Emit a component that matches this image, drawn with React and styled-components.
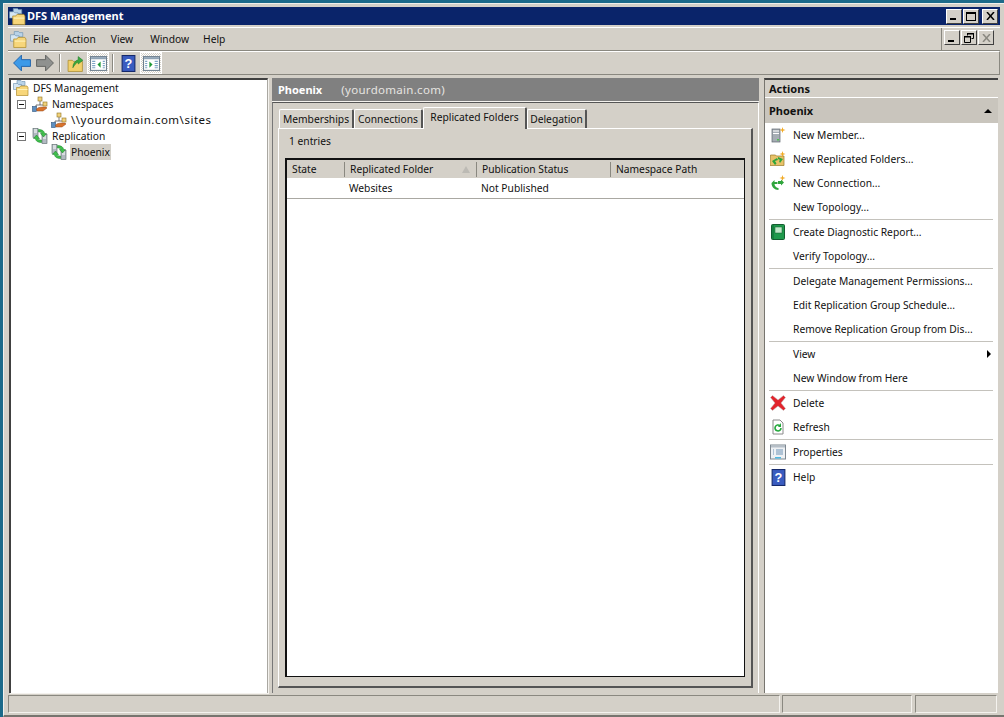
import React from "react";
import styled, { createGlobalStyle } from "styled-components";

const Global = createGlobalStyle`
  html, body { margin: 0; padding: 0; background: #d4d0c8; }
  * { box-sizing: border-box; }
`;

const Desktop = styled.div`
  width: 1004px;
  height: 717px;
  overflow: hidden;
  background: #1c6a8a;
  padding: 3px 0 0 3px;
  font-family: "Noto Sans", "Liberation Sans", sans-serif;
  font-size: 10.25px;
  color: #111;
`;

const Win = styled.div`
  width: 1001px;
  height: 714px;
  background: #d4d0c8;
  border-top: 1px solid #f2f0ec;
  border-left: 1px solid #f2f0ec;
  border-bottom: 2px solid #77756f;
  padding: 3px 4px 0 4px;
  display: flex;
  flex-direction: column;
`;

const TitleBar = styled.div`
  height: 18px;
  flex: none;
  background: #0a246a;
  display: flex;
  align-items: center;
  padding: 0 2px 0 1px;
  color: #fff;
  font-weight: 700;
  font-size: 11px;
  gap: 1px;
`;

const TitleText = styled.span`
  flex: 1;
  padding-bottom: 2px;
`;

const CaptionBtn = styled.div`
  width: 16px;
  height: 15px;
  margin-left: ${(p) => (p.$gap ? 2 : 0)}px;
  background: #d4d0c8;
  border: 1px solid;
  border-color: #fff #404040 #404040 #fff;
  display: flex;
  align-items: center;
  justify-content: center;
`;

const MenuRow = styled.div`
  margin-top: 2px;
  height: 24px;
  flex: none;
  display: flex;
  border-top: 1px solid #fff;
`;

const MenuBar = styled.div`
  flex: 1;
  display: flex;
  align-items: center;
  padding-left: 2px;
  border-right: 1px solid #8a8880;
  border-bottom: 1px solid #8a8880;
`;

const MenuItem = styled.span`
  margin-left: ${(p) => p.$left}px;
  padding-bottom: 1px;
`;

const MdiButtons = styled.div`
  width: 58px;
  display: flex;
  align-items: center;
  padding: 0 0 3px 2px;
  gap: 1px;
  border-bottom: 1px solid #8a8880;
`;

const MdiBtn = styled(CaptionBtn)`
  width: 16px;
  height: 15px;
`;

const ToolBar = styled.div`
  height: 24px;
  flex: none;
  display: flex;
  align-items: center;
  padding-left: 2px;
  border-top: 1px solid #fff;
  border-right: 1px solid #8a8880;
  border-bottom: 1px solid #8a8880;
`;

const ToolBtn = styled.div`
  width: ${(p) => (p.$toggled ? 22 : 23)}px;
  height: 22px;
  display: flex;
  align-items: center;
  justify-content: center;
  ${(p) =>
    p.$toggled &&
    `background: repeating-conic-gradient(#fff 0 25%, #d4d0c8 0 50%) 0 0 / 2px 2px;
     border: 1px solid #fff;`}
`;

const ToolSep = styled.div`
  width: 2px;
  height: 18px;
  margin: 0 3px;
  border-left: 1px solid #8a8880;
  border-right: 1px solid #fff;
`;

const Main = styled.div`
  margin-top: 3px;
  flex: 1;
  min-height: 0;
  display: flex;
`;

const TreePane = styled.div`
  width: 259px;
  flex: none;
  margin-left: 1px;
  background: #fff;
  border-top: 2px solid #404040;
  border-left: 2px solid #404040;
  border-right: 1px solid #aaa8a2;
  box-shadow: 1px 1px 0 #f4f2ee;
  padding: 0 0 0 2px;
`;

const TreeRow = styled.div`
  height: 16px;
  display: flex;
  align-items: center;
  padding-left: ${(p) => p.$indent}px;
`;

const ExpandBox = styled.div`
  width: 9px;
  height: 9px;
  margin-right: 6px;
  border: 1px solid #777;
  background: #fff;
  position: relative;
  &::after {
    content: "";
    position: absolute;
    left: 1px;
    top: 3px;
    width: 5px;
    height: 1px;
    background: #111;
  }
`;

const TreeLabel = styled.span`
  margin-left: ${(p) => (p.$selected ? 3 : 4)}px;
  padding: 0 ${(p) => (p.$selected ? 1 : 0)}px;
  height: 16px;
  line-height: 16px;
  font-size: ${(p) => (p.$big ? 11.5 : 10.25)}px;
  letter-spacing: ${(p) => (p.$big ? 0.5 : 0)}px;
  background: ${(p) => (p.$selected ? "#d4d0c8" : "transparent")};
`;

const CenterPane = styled.div`
  width: 487px;
  flex: none;
  margin-left: 4px;
  display: flex;
  flex-direction: column;
`;

const CenterHeader = styled.div`
  height: 24px;
  flex: none;
  background: #808080;
  border-bottom: 1px solid #f4f2ee;
  display: flex;
  align-items: center;
  padding: 0 6px;
  color: #fff;
  font-weight: 700;
  font-size: 11px;
`;

const HeaderDomain = styled.span`
  margin-left: 19px;
  font-weight: 400;
  color: #e6e4e0;
  font-size: 11.5px;
  letter-spacing: 0.3px;
`;

const CenterBody = styled.div`
  flex: 1;
  min-height: 0;
  border-top: 1px solid #555;
  border-left: 1px solid #777;
  border-right: 1px solid #fff;
  padding: 4px 5px 5px 5px;
  display: flex;
  flex-direction: column;
`;

const Tabs = styled.div`
  height: 21px;
  flex: none;
  display: flex;
  align-items: flex-end;
  padding-left: 1px;
  position: relative;
  z-index: 1;
`;

const Tab = styled.div`
  width: ${(p) => p.$width}px;
  height: ${(p) => (p.$active ? 22 : 19)}px;
  margin-bottom: ${(p) => (p.$active ? -1 : 0)}px;
  background: #d4d0c8;
  border-top: 1px solid #fff;
  border-left: 1px solid #fff;
  border-right: 2px solid #555;
  border-radius: 2px 2px 0 0;
  display: flex;
  align-items: center;
  justify-content: center;
  padding-bottom: ${(p) => (p.$active ? 4 : 0)}px;
`;

const TabPanel = styled.div`
  flex: 1;
  min-height: 0;
  border-top: 1px solid #fff;
  border-left: 1px solid #fff;
  border-right: 2px solid #555;
  border-bottom: 2px solid #555;
  padding: 0 6px 9px 6px;
  display: flex;
  flex-direction: column;
`;

const EntryCount = styled.div`
  height: 29px;
  flex: none;
  padding: 5px 0 0 4px;
  line-height: 14px;
`;

const Table = styled.div`
  flex: 1;
  min-height: 0;
  background: #fff;
  border: 2px solid #111;
  border-right-width: 1px;
  border-bottom-width: 1px;
`;

const HeaderRow = styled.div`
  height: 18px;
  background: #d4d0c8;
  display: grid;
  grid-template-columns: 58px 132px 134px 1fr;
  align-items: center;
`;

const HeaderCell = styled.div`
  height: 15px;
  padding-left: 5px;
  line-height: 15px;
  position: relative;
  border-right: ${(p) => (p.$last ? "none" : "1px solid #8a8880")};
`;

const SortArrow = styled.span`
  position: absolute;
  right: 6px;
  top: 4px;
  width: 0;
  height: 0;
  border-left: 4px solid transparent;
  border-right: 4px solid transparent;
  border-bottom: 7px solid #bcbab4;
`;

const DataRow = styled.div`
  height: 21px;
  display: grid;
  grid-template-columns: 58px 132px 134px 1fr;
  align-items: center;
  border-bottom: 1px solid #aaa8a2;
`;

const DataCell = styled.div`
  padding-left: ${(p) => p.$pad}px;
`;

const ActionsPane = styled.div`
  width: 234px;
  flex: none;
  margin-left: 5px;
  display: flex;
  flex-direction: column;
  border-left: 1px solid #77756f;
  border-top: 2px solid #404040;
`;

const ActionsTitle = styled.div`
  height: 18px;
  flex: none;
  padding-left: 4px;
  font-weight: 700;
  font-size: 11px;
  display: flex;
  align-items: center;
  border-bottom: 1px solid #fff;
`;

const SectionHead = styled.div`
  height: 25px;
  flex: none;
  background: #c9c5bd;
  padding: 0 6px 0 4px;
  font-weight: 700;
  font-size: 11px;
  display: flex;
  align-items: center;
  justify-content: space-between;
`;

const UpArrow = styled.span`
  width: 0;
  height: 0;
  border-left: 4px solid transparent;
  border-right: 4px solid transparent;
  border-bottom: 4px solid #000;
`;

const ActionList = styled.div`
  flex: 1;
  background: #fff;
`;

const ActionRow = styled.div`
  height: 24px;
  display: flex;
  align-items: center;
  padding-right: 7px;
`;

const ActionIcon = styled.div`
  width: 28px;
  flex: none;
  padding-left: 5px;
  display: flex;
  align-items: center;
`;

const ActionText = styled.span`
  flex: 1;
`;

const RightArrow = styled.span`
  width: 0;
  height: 0;
  border-top: 4px solid transparent;
  border-bottom: 4px solid transparent;
  border-left: 4px solid #000;
`;

const Divider = styled.div`
  height: 1px;
  margin: 0 5px 0 4px;
  background: #c4c2bc;
`;

const StatusBar = styled.div`
  height: 18px;
  flex: none;
  margin-top: 2px;
  margin-bottom: 2px;
  display: flex;
`;

const StatusCell = styled.div`
  width: ${(p) => p.$width}px;
  margin-left: ${(p) => p.$gap}px;
  border: 1px solid;
  border-color: #8a8880 #f4f2ee #f4f2ee #8a8880;
`;

const Svg = ({ size = 16, children }) => (
  <svg width={size} height={size} viewBox="0 0 16 16">
    {children}
  </svg>
);

const FolderStack = ({ size = 16 }) => (
  <Svg size={size}>
    <path d="M4 .5h4l1 1h3v4H4z" fill="#b9d3e8" stroke="#6a8fae" strokeWidth=".6" />
    <path d="M.5 3.500h4l1 1h3v5h-8z" fill="#d5e6f3" stroke="#6a8fae" strokeWidth=".6" />
    <path d="M3.500 7.500h3l1-1.500h6.500l1 1.500v8h-11.500z" fill="#f7d67a" stroke="#b08d2e" strokeWidth=".7" />
    <path d="M4.500 9.500h10" stroke="#fff2b8" />
  </Svg>
);

const Namespace = () => (
  <Svg>
    <path d="M8 5v4M4 9h9M4 9v2M13 9v1" stroke="#555" fill="none" strokeWidth=".8" />
    <rect x="6" y="1" width="4" height="4" fill="#f1d27b" stroke="#8f7424" strokeWidth=".6" />
    <rect x="11" y="6" width="4" height="4" fill="#f1d27b" stroke="#8f7424" strokeWidth=".6" />
    <rect x=".5" y="10.500" width="4" height="5" fill="#5f8fbf" stroke="#2e5580" strokeWidth=".6" />
    <path d="M4.500 13c2-2 5-2 9.500-2l1 1-4 3H5z" fill="#d9742c" stroke="#93451a" strokeWidth=".5" />
  </Svg>
);

const Replication = () => (
  <Svg>
    <rect x="1" y="0.500" width="5" height="9" fill="#b2bac2" stroke="#566" strokeWidth=".6" />
    <path d="M2 2h3M2 4h3" stroke="#fff" />
    <rect x="10" y="6.500" width="5" height="9" fill="#b2bac2" stroke="#566" strokeWidth=".6" />
    <path d="M11 8h3M11 10h3" stroke="#fff" />
    <path d="M6.500 1.500c3.500 0 6 1.500 6 4l2 0-3 3.500-3-3.500h1.500c0-1-1.500-1.500-3.500-1.500z" fill="#3fc04c" stroke="#1b7a28" strokeWidth=".5" />
    <path d="M9.500 14.500c-3.500 0-6-1.500-6-4l-2 0 3-3.500 3 3.500H6c0 1 1.500 1.500 3.500 1.500z" fill="#3fc04c" stroke="#1b7a28" strokeWidth=".5" />
  </Svg>
);

const BackArrow = ({ fill, stroke }) => (
  <Svg size={18}>
    <path d="M.5 8l7-7v4h8v6h-8v4z" fill={fill} stroke={stroke} strokeWidth=".8" />
  </Svg>
);

const ForwardArrow = ({ fill, stroke }) => (
  <Svg size={18}>
    <path d="M15.500 8l-7-7v4h-8v6h8v4z" fill={fill} stroke={stroke} strokeWidth=".8" />
  </Svg>
);

const UpFolder = () => (
  <Svg size={17}>
    <path d="M1 5h4l1 1h8.500v9.500H1z" fill="#f2d06b" stroke="#a88a2c" strokeWidth=".7" />
    <path d="M5.500 12c0-4 2-6.500 5-7.500V1.500L15 5l-4.500 3.500V6.500c-2 1-3.500 3-5 5.500z" fill="#3aa93f" stroke="#1e7a28" strokeWidth=".5" />
  </Svg>
);

const PaneIcon = ({ right }) => (
  <Svg size={17}>
    <rect x="0.500" y="1.500" width="15" height="13" fill="#fff" stroke="#6d7f8f" />
    <rect x="1" y="2" width="14" height="2" fill="#8ea2b4" />
    {right ? (
      <>
        <path d="M2 6h2M2 8h2M2 10h2M2 12h2" stroke="#7ea3c4" />
        <path d="M6 6l3 3-3 3z" fill="#1f9a36" />
        <path d="M11 6h3M11 8h3M11 10h3M11 12h3" stroke="#7ea3c4" />
      </>
    ) : (
      <>
        <path d="M2 6h3M2 8h3M2 10h3M2 12h3" stroke="#7ea3c4" />
        <path d="M10 6L7 9l3 3z" fill="#1f9a36" />
        <path d="M12 6h2M12 8h2M12 10h2M12 12h2" stroke="#7ea3c4" />
      </>
    )}
  </Svg>
);

const HelpIcon = () => (
  <Svg size={17}>
    <rect x="2" y="0.500" width="12" height="15" fill="#3a5cc0" stroke="#15296b" />
    <text x="8" y="12.500" textAnchor="middle" fontSize="12" fontWeight="700" fill="#fff" fontFamily="Liberation Sans">?</text>
  </Svg>
);

const Spark = () => (
  <path d="M12.500 0l.7 2.300L15.500 3l-2.300.7-.7 2.300-.7-2.300L9.500 3l2.300-.7z" fill="#f2a922" />
);

const NewMember = () => (
  <Svg>
    <rect x="2" y="2" width="8" height="13" fill="#a6adb4" stroke="#5d666e" strokeWidth=".7" />
    <path d="M3 4h6M3 6.500h6" stroke="#fff" />
    <rect x="7" y="12" width="2" height="1.500" fill="#4fc24f" />
    <Spark />
  </Svg>
);

const NewFolders = () => (
  <Svg>
    <path d="M.5 4h5l1 1h7.500v9.500h-14z" fill="#e8c269" stroke="#9a7a28" strokeWidth=".7" />
    <path d="M7 7L2 10l3 4 1.500-1.500L5 10l3-1z" fill="#2fa53c" />
    <path d="M8 6l5 2-3 4-1-2 1-1-2-1z" fill="#2fa53c" />
    <Spark />
  </Svg>
);

const NewConnection = () => (
  <Svg>
    <path d="M1.500 8l3-3v2h3v2h-3c0 2 2 4 4 4v2c-4 0-7-3-7-7z" fill="#2fa53c" />
    <path d="M8 6h3V4.500l3 3-3 3V9H8z" fill="#2fa53c" />
    <Spark />
  </Svg>
);

const ReportBook = () => (
  <Svg>
    <rect x="1.500" y="0.500" width="13" height="15" rx="1" fill="#1f9a4c" stroke="#145c2f" />
    <rect x="5" y="3" width="7" height="6" fill="#bfe8c8" stroke="#145c2f" strokeWidth=".5" />
    <path d="M3 1v14" stroke="#0f6b33" />
  </Svg>
);

const DeleteX = () => (
  <Svg>
    <path d="M.5 2.500l2-2L8 5l5.500-4.500 2 2L11 8l4.500 5.500-2 2L8 11l-5.500 4.500-2-2L5 8z" fill="#e2242c" stroke="#b8b8b8" strokeWidth=".5" />
  </Svg>
);

const RefreshIcon = () => (
  <Svg>
    <path d="M3 1h7l3 3v11H3z" fill="#fff" stroke="#8a8a8a" />
    <path d="M11 9a3 3 0 1 1-1-2.300" fill="none" stroke="#22a83a" strokeWidth="1.600" />
    <path d="M11 4v4H8z" fill="#22a83a" />
  </Svg>
);

const PropertiesIcon = () => (
  <Svg>
    <rect x=".5" y="1" width="15" height="14" fill="#eef1f4" stroke="#7d8790" />
    <rect x="1" y="1.500" width="14" height="2" fill="#b6bfc8" />
    <path d="M3 6h1M3 8h1M3 10h1M6 6h7M6 8h7M6 10h7" stroke="#6f93b5" />
    <rect x="5" y="13" width="6" height="1.500" fill="#4fb8e0" />
  </Svg>
);

const menuItems = [
  { label: "File", left: 6 },
  { label: "Action", left: 16 },
  { label: "View", left: 15 },
  { label: "Window", left: 17 },
  { label: "Help", left: 14 },
];

const columns = ["State", "Replicated Folder", "Publication Status", "Namespace Path"];

const tabs = [
  { label: "Memberships", width: 75 },
  { label: "Connections", width: 69 },
  { label: "Replicated Folders", width: 104, active: true },
  { label: "Delegation", width: 60 },
];

const actionGroups = [
  [
    { label: "New Member...", icon: <NewMember /> },
    { label: "New Replicated Folders...", icon: <NewFolders /> },
    { label: "New Connection...", icon: <NewConnection /> },
    { label: "New Topology..." },
  ],
  [
    { label: "Create Diagnostic Report...", icon: <ReportBook /> },
    { label: "Verify Topology..." },
  ],
  [
    { label: "Delegate Management Permissions..." },
    { label: "Edit Replication Group Schedule..." },
    { label: "Remove Replication Group from Dis..." },
  ],
  [{ label: "View", submenu: true }, { label: "New Window from Here" }],
  [
    { label: "Delete", icon: <DeleteX /> },
    { label: "Refresh", icon: <RefreshIcon /> },
  ],
  [{ label: "Properties", icon: <PropertiesIcon /> }],
  [{ label: "Help", icon: <HelpIcon /> }],
];

const App = () => (
  <Desktop>
    <Global />
    <Win>
      <TitleBar>
        <FolderStack size={17} />
        <TitleText>DFS Management</TitleText>
        <CaptionBtn>
          <svg width="8" height="8"><rect x="0" y="6" width="6" height="2" fill="#000" /></svg>
        </CaptionBtn>
        <CaptionBtn>
          <svg width="10" height="9"><rect x=".5" y=".5" width="9" height="8" fill="none" stroke="#000" /><rect x="0" y="0" width="10" height="2" fill="#000" /></svg>
        </CaptionBtn>
        <CaptionBtn $gap>
          <svg width="9" height="8"><path d="M1 0l7 8M8 0l-7 8" stroke="#000" strokeWidth="1.500" /></svg>
        </CaptionBtn>
      </TitleBar>
      <MenuRow>
        <MenuBar>
          <FolderStack size={17} />
          {menuItems.map((m) => (
            <MenuItem key={m.label} $left={m.left}>{m.label}</MenuItem>
          ))}
        </MenuBar>
        <MdiButtons>
          <MdiBtn>
            <svg width="8" height="8"><rect x="0" y="6" width="6" height="2" fill="#000" /></svg>
          </MdiBtn>
          <MdiBtn>
            <svg width="10" height="10"><path d="M3.500 2.500v-2h6v5h-2M.5 3.500h6v6h-6z" fill="none" stroke="#000" /><path d="M3 0h7v1.500H3zM0 3h7v1.500H0z" /></svg>
          </MdiBtn>
          <MdiBtn>
            <svg width="9" height="8"><path d="M1 0l7 8M8 0l-7 8" stroke="#8a8880" strokeWidth="1.500" /></svg>
          </MdiBtn>
        </MdiButtons>
      </MenuRow>
      <ToolBar>
        <ToolBtn><BackArrow fill="#3d9ae8" stroke="#1c5fa8" /></ToolBtn>
        <ToolBtn><ForwardArrow fill="#8f918f" stroke="#5c5e5c" /></ToolBtn>
        <ToolSep />
        <ToolBtn><UpFolder /></ToolBtn>
        <ToolBtn $toggled><PaneIcon /></ToolBtn>
        <ToolSep />
        <ToolBtn><HelpIcon /></ToolBtn>
        <ToolBtn $toggled><PaneIcon right /></ToolBtn>
      </ToolBar>
      <Main>
        <TreePane>
          <TreeRow $indent={0}><FolderStack /><TreeLabel>DFS Management</TreeLabel></TreeRow>
          <TreeRow $indent={4}><ExpandBox /><Namespace /><TreeLabel>Namespaces</TreeLabel></TreeRow>
          <TreeRow $indent={38}><Namespace /><TreeLabel $big>\\yourdomain.com\sites</TreeLabel></TreeRow>
          <TreeRow $indent={4}><ExpandBox /><Replication /><TreeLabel>Replication</TreeLabel></TreeRow>
          <TreeRow $indent={38}><Replication /><TreeLabel $selected>Phoenix</TreeLabel></TreeRow>
        </TreePane>
        <CenterPane>
          <CenterHeader>
            Phoenix
            <HeaderDomain>(yourdomain.com)</HeaderDomain>
          </CenterHeader>
          <CenterBody>
            <Tabs>
              {tabs.map((t) => (
                <Tab key={t.label} $width={t.width} $active={t.active}>{t.label}</Tab>
              ))}
            </Tabs>
            <TabPanel>
              <EntryCount>1 entries</EntryCount>
              <Table>
                <HeaderRow>
                  {columns.map((c, i) => (
                    <HeaderCell key={c} $last={i === 3}>
                      {c}
                      {i === 1 && <SortArrow />}
                    </HeaderCell>
                  ))}
                </HeaderRow>
                <DataRow>
                  <DataCell $pad={5} />
                  <DataCell $pad={4}>Websites</DataCell>
                  <DataCell $pad={4}>Not Published</DataCell>
                  <DataCell $pad={5} />
                </DataRow>
              </Table>
            </TabPanel>
          </CenterBody>
        </CenterPane>
        <ActionsPane>
          <ActionsTitle>Actions</ActionsTitle>
          <SectionHead>Phoenix<UpArrow /></SectionHead>
          <ActionList>
            {actionGroups.map((group, gi) => (
              <React.Fragment key={gi}>
                {gi > 0 && <Divider />}
                {group.map((a) => (
                  <ActionRow key={a.label}>
                    <ActionIcon>{a.icon}</ActionIcon>
                    <ActionText>{a.label}</ActionText>
                    {a.submenu && <RightArrow />}
                  </ActionRow>
                ))}
              </React.Fragment>
            ))}
          </ActionList>
        </ActionsPane>
      </Main>
      <StatusBar>
        <StatusCell $width={772} $gap={0} />
        <StatusCell $width={130} $gap={2} />
        <StatusCell $width={82} $gap={3} />
      </StatusBar>
    </Win>
  </Desktop>
);

export default App;
